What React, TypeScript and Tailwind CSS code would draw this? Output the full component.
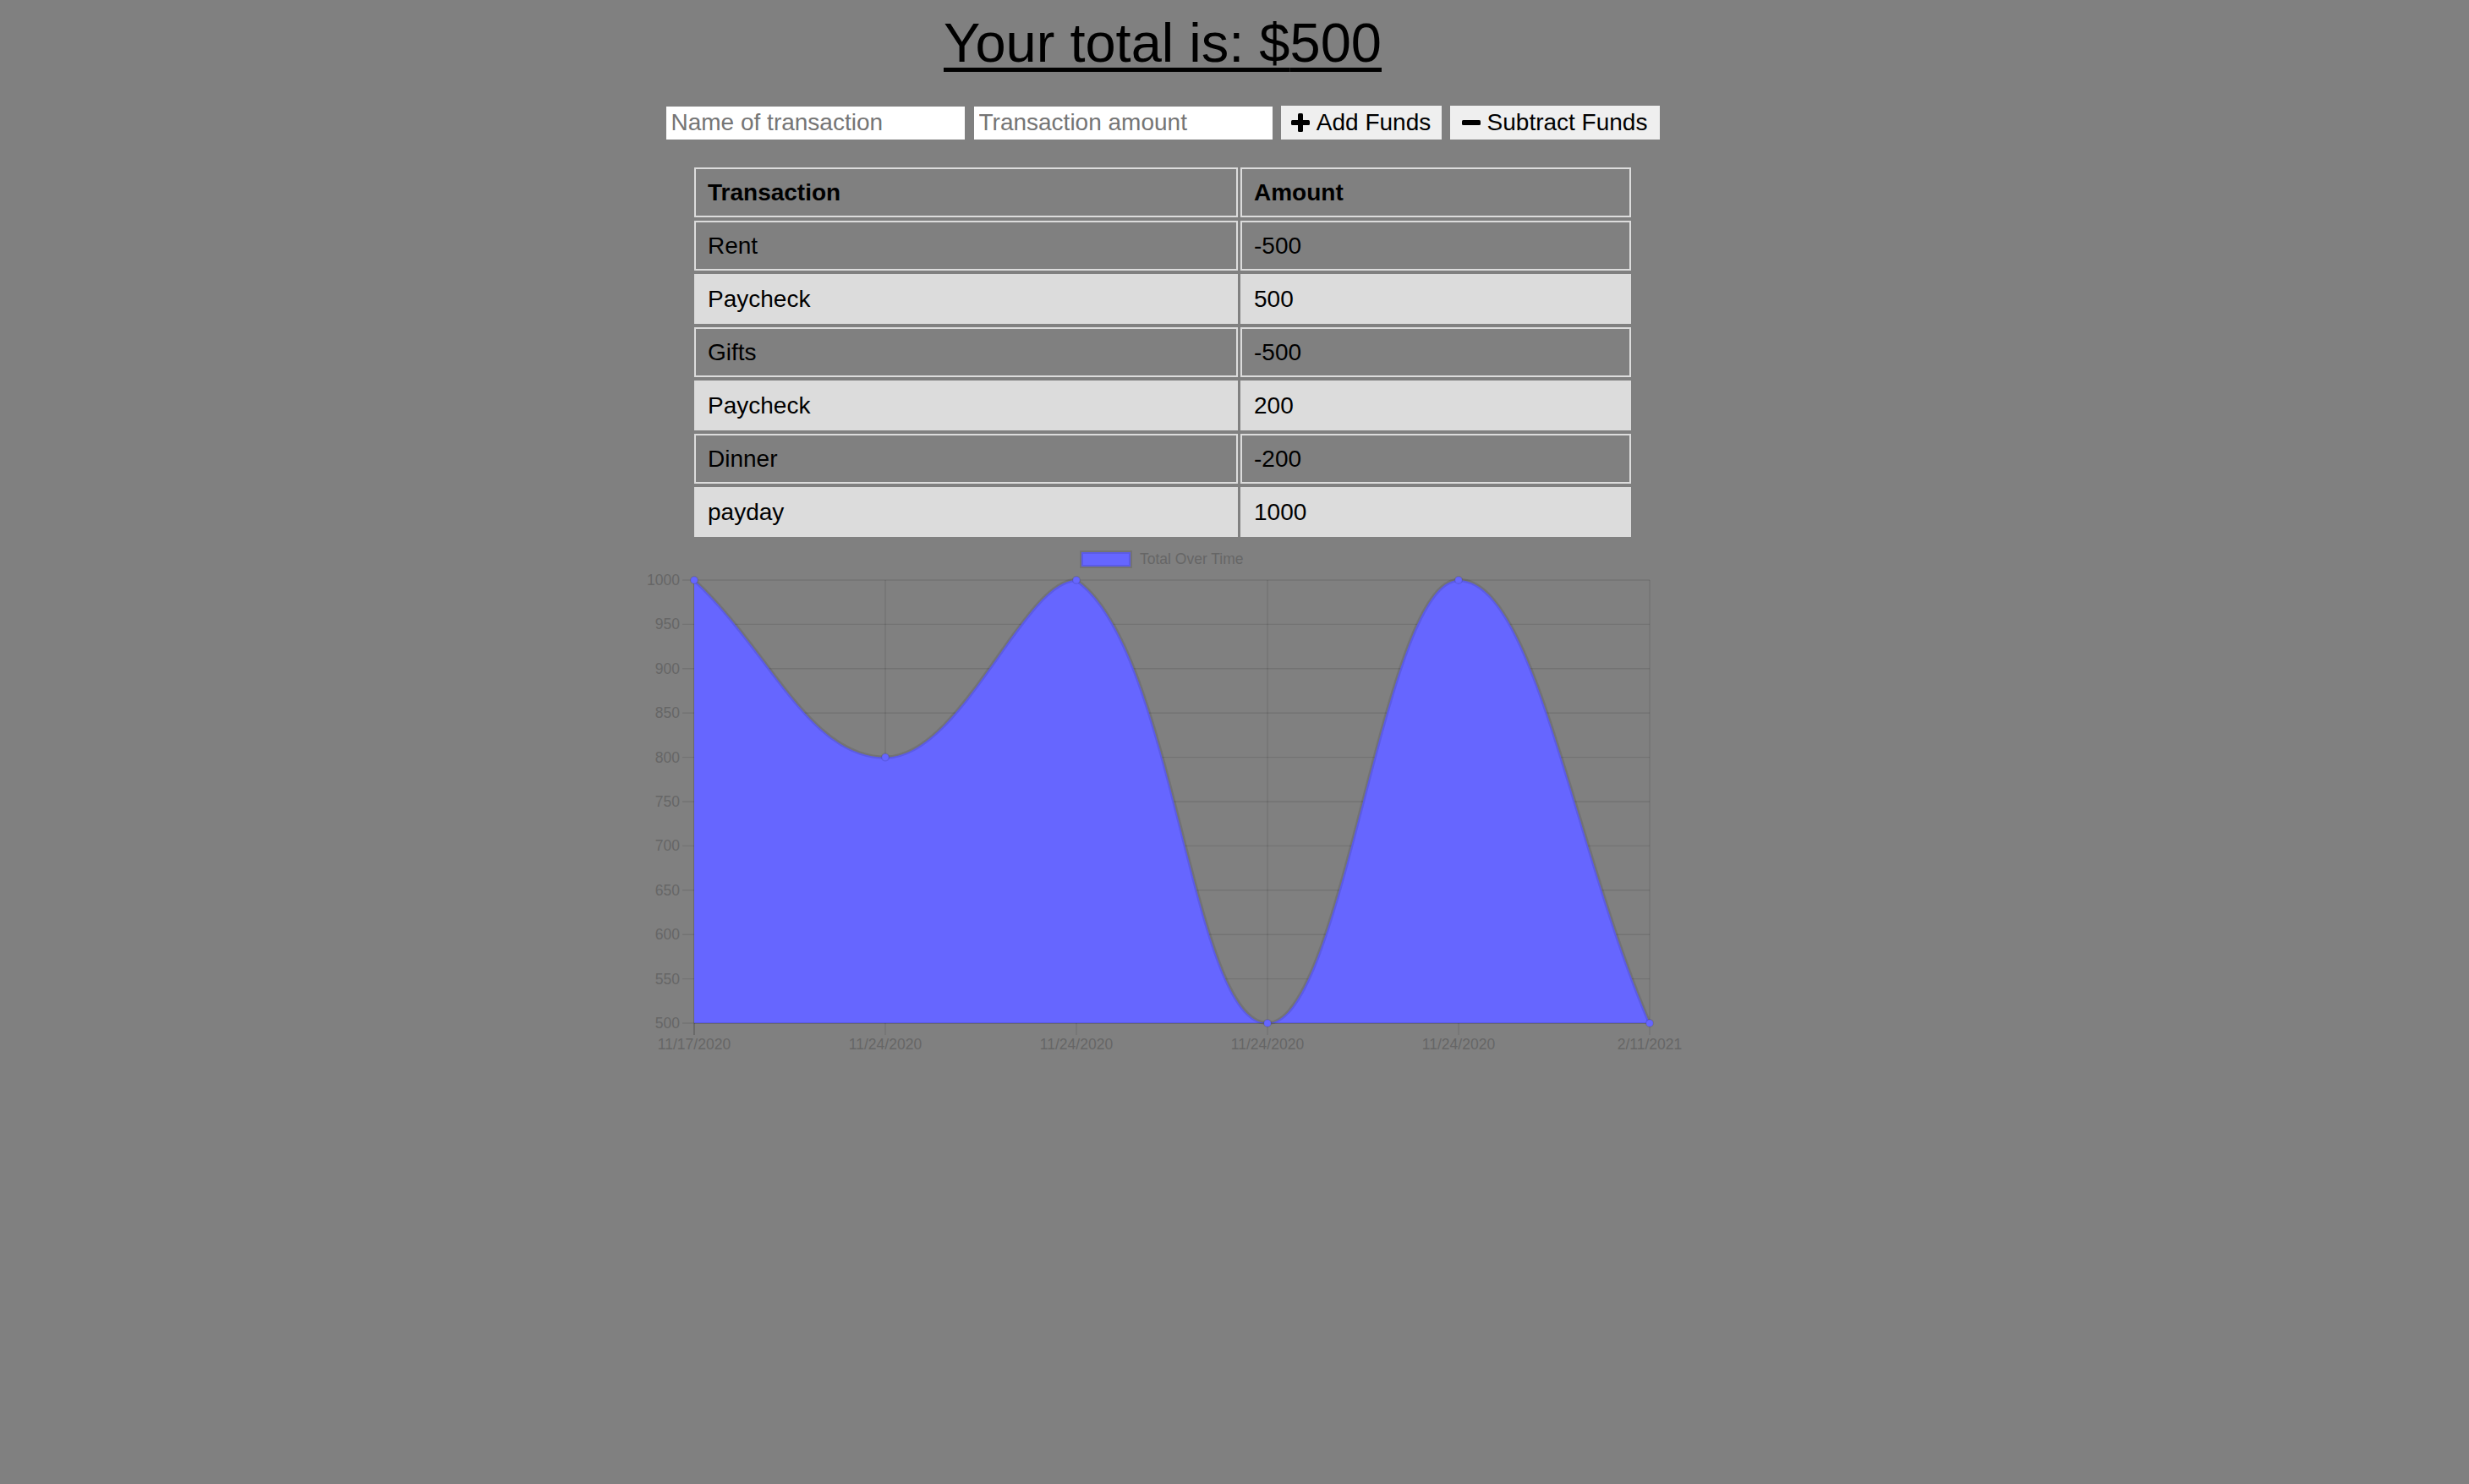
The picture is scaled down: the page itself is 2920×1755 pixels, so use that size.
import React, { useMemo, useState } from 'react';

type Tx = { name: string; value: number };

const transactions: Tx[] = [
  { name: 'Rent', value: -500 },
  { name: 'Paycheck', value: 500 },
  { name: 'Gifts', value: -500 },
  { name: 'Paycheck', value: 200 },
  { name: 'Dinner', value: -200 },
  { name: 'payday', value: 1000 },
];

const labels = ['11/17/2020', '11/24/2020', '11/24/2020', '11/24/2020', '11/24/2020', '2/11/2021'];

// chart area, in page pixels (the svg viewBox uses the same numbers)
const LEFT = 821;
const RIGHT = 1951;
const TOP = 687;
const BOTTOM = 1211;
const MIN = 500;
const MAX = 1000;

type Pt = { x: number; y: number };

const clamp = (v: number, lo: number, hi: number) => Math.max(lo, Math.min(hi, v));

// same spline as chart.js (tension 0.4, control points capped to the area)
function buildPath(pts: Pt[]) {
  const t = 0.4;
  const cps = pts.map((cur, i) => {
    const prev = pts[i - 1] || cur;
    const next = pts[i + 1] || cur;
    const d01 = Math.hypot(cur.x - prev.x, cur.y - prev.y);
    const d12 = Math.hypot(next.x - cur.x, next.y - cur.y);
    const sum = d01 + d12;
    const s01 = sum ? d01 / sum : 0;
    const s12 = sum ? d12 / sum : 0;
    const fa = t * s01;
    const fb = t * s12;
    const cap = (p: Pt) => ({ x: clamp(p.x, LEFT, RIGHT), y: clamp(p.y, TOP, BOTTOM) });
    return {
      prev: cap({ x: cur.x - fa * (next.x - prev.x), y: cur.y - fa * (next.y - prev.y) }),
      next: cap({ x: cur.x + fb * (next.x - prev.x), y: cur.y + fb * (next.y - prev.y) }),
    };
  });
  let d = `M${pts[0].x} ${pts[0].y}`;
  for (let i = 1; i < pts.length; i++) {
    const a = cps[i - 1].next;
    const b = cps[i].prev;
    d += ` C${a.x} ${a.y} ${b.x} ${b.y} ${pts[i].x} ${pts[i].y}`;
  }
  return d;
}

const PlusIcon = () => (
  <svg viewBox="0 0 22 22" className="w-[22px] h-[22px]" fill="currentColor">
    <rect x="8" y="0" width="6" height="22" rx="1.5" />
    <rect x="0" y="8" width="22" height="6" rx="1.5" />
  </svg>
);

const MinusIcon = () => (
  <svg viewBox="0 0 22 22" className="w-[22px] h-[22px]" fill="currentColor">
    <rect x="0" y="8" width="22" height="6" rx="1.5" />
  </svg>
);

const TotalChart: React.FC<{ values: number[] }> = ({ values }) => {
  const step = (RIGHT - LEFT) / (values.length - 1);
  const scaleY = (v: number) => TOP + ((MAX - v) / (MAX - MIN)) * (BOTTOM - TOP);
  const pts = values.map((v, i) => ({ x: LEFT + i * step, y: scaleY(v) }));
  const line = buildPath(pts);
  const area = `${line} L${RIGHT} ${BOTTOM} L${LEFT} ${BOTTOM} Z`;
  const yTicks = [1000, 950, 900, 850, 800, 750, 700, 650, 600, 550, 500];

  return (
    <svg viewBox="740 640 1270 620" className="w-[1270px] h-[620px] block" style={{ fontFamily: '"Liberation Sans", Arial, sans-serif' }}>
      {/* legend */}
      <rect x={1279} y={654} width={58} height={17} fill="#6666ff" stroke="rgba(0,0,0,0.1)" strokeWidth={4} />
      <text x={1348} y={668} fontSize={17.5} fill="#666">Total Over Time</text>

      {/* grid */}
      {yTicks.map((v) => (
        <line key={'h' + v} x1={LEFT - 14} x2={RIGHT} y1={scaleY(v)} y2={scaleY(v)} stroke="rgba(0,0,0,0.1)" strokeWidth={1.4} />
      ))}
      {pts.map((p, i) => (
        <line key={'v' + i} x1={p.x} x2={p.x} y1={TOP} y2={BOTTOM + 14} stroke={i === 0 ? 'rgba(0,0,0,0.25)' : 'rgba(0,0,0,0.1)'} strokeWidth={1.4} />
      ))}

      {/* data */}
      <path d={area} fill="#6666ff" />
      <path d={line} fill="none" stroke="rgba(0,0,0,0.1)" strokeWidth={4.3} />
      <line x1={LEFT} x2={RIGHT} y1={BOTTOM} y2={BOTTOM} stroke="rgba(0,0,0,0.15)" strokeWidth={1.4} />
      {pts.map((p, i) => (
        <circle key={'c' + i} cx={p.x} cy={p.y} r={4.3} fill="#6666ff" stroke="rgba(0,0,0,0.1)" strokeWidth={1.4} />
      ))}

      {/* axis labels */}
      {yTicks.map((v) => (
        <text key={'yl' + v} x={804} y={scaleY(v) + 6} fontSize={17.5} fill="#666" textAnchor="end">
          {v}
        </text>
      ))}
      {pts.map((p, i) => (
        <text key={'xl' + i} x={p.x} y={1242} fontSize={17.5} fill="#666" textAnchor="middle">
          {labels[i]}
        </text>
      ))}
    </svg>
  );
};

export default function App() {
  const [name, setName] = useState('');
  const [amount, setAmount] = useState('');

  const total = transactions.reduce((s, t) => s + t.value, 0);

  const runningTotals = useMemo(() => {
    const out: number[] = [];
    let sum = 0;
    [...transactions].reverse().forEach((t) => {
      sum += t.value;
      out.push(sum);
    });
    return out;
  }, []);

  return (
    <div className="min-h-screen w-full bg-[#808080] text-black font-['Liberation_Sans',Arial,sans-serif]">
      <div className="w-[2750px] flex flex-col items-center pt-[14px]">
        <h1 className="text-[65px] leading-[74px] underline decoration-[5px] underline-offset-[7px]">
          Your total is: ${total}
        </h1>

        <div className="mt-[37px] flex items-center h-[40px]">
          <input
            value={name}
            onChange={(e) => setName(e.target.value)}
            placeholder="Name of transaction"
            className="w-[353px] h-[39px] bg-white px-[6px] text-[28px] outline-none placeholder:text-[#757575]"
          />
          <input
            value={amount}
            onChange={(e) => setAmount(e.target.value)}
            placeholder="Transaction amount"
            className="ml-[11px] w-[353px] h-[39px] bg-white px-[6px] text-[28px] outline-none placeholder:text-[#757575]"
          />
          <button className="ml-[10px] w-[190px] h-[40px] bg-[#efefef] flex items-center justify-center gap-[8px] text-[28px]">
            <PlusIcon />
            <span>Add Funds</span>
          </button>
          <button className="ml-[10px] w-[248px] h-[40px] bg-[#efefef] flex items-center justify-center gap-[8px] text-[28px]">
            <MinusIcon />
            <span>Subtract Funds</span>
          </button>
        </div>

        <div className="mt-[33px] grid grid-cols-[643px_462px] gap-x-[3px] gap-y-[4px] text-[28px] leading-[31px]">
          <div className="border-2 border-[#dcdcdc] px-[14px] py-[12px] font-bold">Transaction</div>
          <div className="border-2 border-[#dcdcdc] px-[14px] py-[12px] font-bold">Amount</div>
          {transactions.map((t, i) => {
            const light = i % 2 === 1;
            const cell = light
              ? 'border-2 border-[#dcdcdc] bg-[#dcdcdc] px-[14px] py-[12px]'
              : 'border-2 border-[#dcdcdc] px-[14px] py-[12px]';
            return (
              <React.Fragment key={i}>
                <div className={cell}>{t.name}</div>
                <div className={cell}>{t.value}</div>
              </React.Fragment>
            );
          })}
        </div>

        <div className="mt-[4px]">
          <TotalChart values={runningTotals} />
        </div>
      </div>
    </div>
  );
}
